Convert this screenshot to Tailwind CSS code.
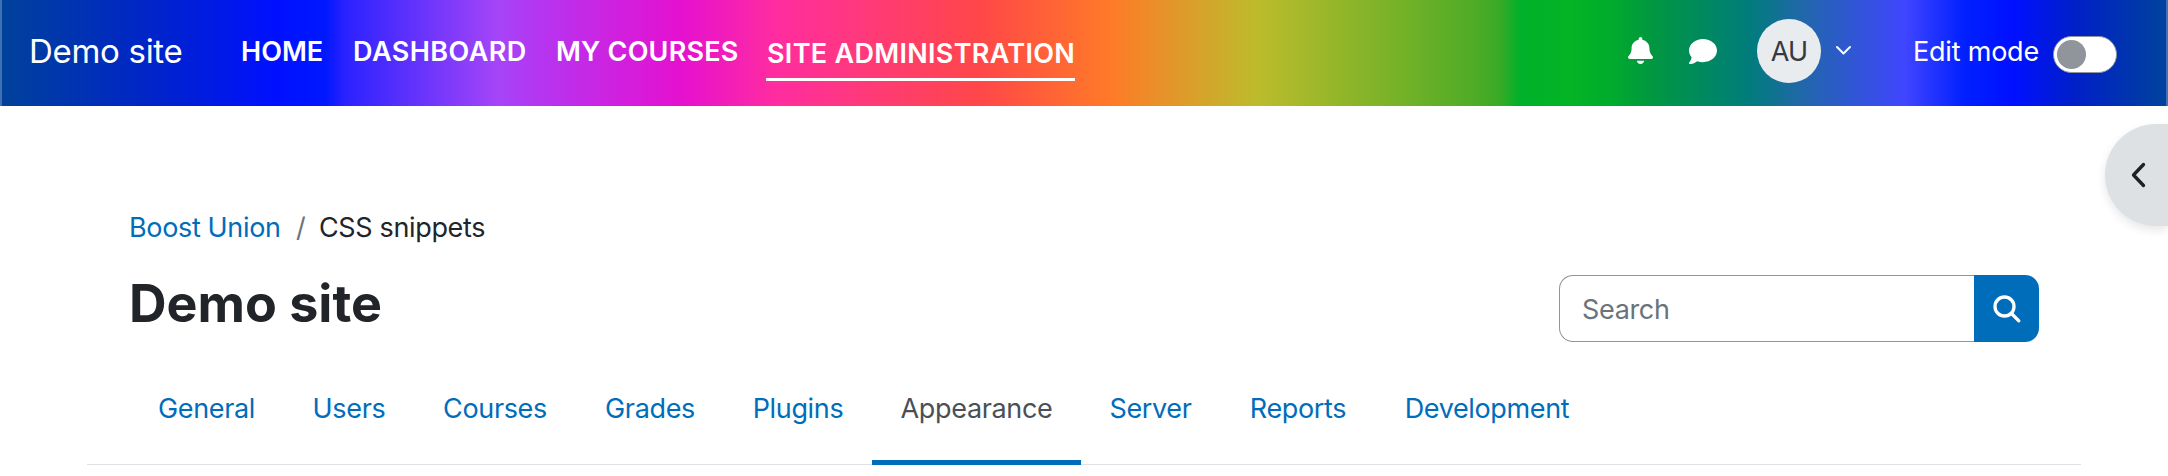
<!DOCTYPE html>
<html lang="en">
<head>
<meta charset="utf-8">
<title>Demo site</title>
<script src="https://cdn.jsdelivr.net/npm/@tailwindcss/browser@4"></script>
</head>
<body class="h-[476px] overflow-hidden bg-white font-['Inter','Liberation_Sans',sans-serif] text-[27px] leading-[40px] tracking-[-0.35px] text-[#212529]">
<header class="flex h-[106px] items-center border-x-2 border-white/25 bg-origin-border bg-[linear-gradient(90deg,#00429a_0px,#0025c8_150px,#0010ff_275px,#0018ff_325px,#2a22ff_345px,#a545f8_497px,#b535f0_540px,#e510d0_680px,#ff2ca0_775px,#ff3a78_870px,#ff4748_980px,#ff7a28_1110px,#bcbc2c_1257px,#52ac26_1470px,#38aa26_1500px,#00b02a_1520px,#04b424_1570px,#00ac2c_1610px,#00983f_1650px,#007c7c_1750px,#2068a8_1800px,#4045ff_1905px,#0020ff_1965px,#0010ff_2015px,#0020c8_2075px,#0040a0_2160px)] pl-[27px] text-white">
  <a class="mb-[4px] w-[212px] whitespace-nowrap text-[33px] tracking-[-0.3px]">Demo site</a>
  <nav class="flex items-center whitespace-nowrap font-semibold">
    <a class="mb-[2px] w-[112px] tracking-normal">HOME</a>
    <a class="mb-[2px] w-[203px] tracking-[0.45px]">DASHBOARD</a>
    <a class="mb-[2px] w-[210px] tracking-[0.2px]">MY COURSES</a>
    <a class="mt-[8px] w-[309px] border-b-3 border-white pb-[4px] pl-[1px] tracking-[0.3px]">SITE ADMINISTRATION</a>
  </nav>
  <div class="ml-auto flex items-center">
    <svg class="mt-[-5px] mr-[36px] h-[27px] w-[25px]" viewBox="0 0 448 512" preserveAspectRatio="none" fill="currentColor"><path d="M224 0c-17.700 0-32 14.300-32 32v19.200C119 66 64 130.600 64 208v18.800c0 47-17.300 92.400-48.500 127.600l-7.400 8.300c-8.400 9.400-10.400 22.900-5.300 34.400S19.400 416 32 416h384c12.600 0 24-7.400 29.200-18.900s3.100-25-5.300-34.400l-7.400-8.300C401.300 319.200 384 273.900 384 226.800V208c0-77.400-55-142-128-156.800V32c0-17.700-14.300-32-32-32zm45.300 493.300c12-12 18.700-28.300 18.700-45.300H160c0 17 6.700 33.300 18.700 45.300S207 512 224 512s33.300-6.700 45.300-18.700z"/></svg>
    <svg class="mt-[-3px] mr-[40px] h-[25px] w-[28px]" viewBox="0 32 512 448" preserveAspectRatio="none" fill="currentColor"><path d="M512 240c0 114.900-114.600 208-256 208-37.100 0-72.300-6.400-104.100-17.900-11.900 8.700-31.300 20.600-54.300 30.600C73.600 471.100 44.700 480 16 480c-6.500 0-12.300-3.900-14.800-9.900s-1.100-12.800 3.400-17.400l.3-.3c.3-.3.7-.7 1.300-1.400 1.100-1.200 2.800-3.100 4.900-5.700 4.100-5 9.600-12.400 15.200-21.600 10-16.600 19.500-38.400 21.400-62.900C17.700 326.800 0 285.100 0 240 0 125.100 114.600 32 256 32s256 93.100 256 208z"/></svg>
    <div class="mt-[-5px] flex size-[64px] items-center justify-center rounded-full bg-[#e9ecef] pt-[2px] tracking-[-0.8px] text-[#343a40]">AU</div>
    <svg class="mt-[-5px] mr-[61px] ml-[14px] h-[11px] w-[17px]" viewBox="0 0 17 11" fill="none" stroke="currentColor" stroke-width="2" stroke-linecap="round" stroke-linejoin="round"><path d="M2 2l6.500 6.500L15 2"/></svg>
    <span class="mb-[2px] whitespace-nowrap tracking-[-0.2px]">Edit mode</span>
    <div class="mt-[3px] mr-[49px] ml-[14px] flex h-[37px] w-[64px] items-center rounded-full border border-[#8f959e] bg-white pl-[3px]"><span class="size-[29px] rounded-full bg-[#8f959b]"></span></div>
  </div>
</header>
<div class="absolute top-[124px] right-0 flex h-[102px] w-[63px] items-center rounded-l-[51px] bg-[#dde1e3] pl-[26px] shadow-[0_4px_10px_rgba(0,0,0,0.10)]">
  <svg class="h-[26px] w-[15px]" viewBox="0 0 15 26" fill="none" stroke="#1d2125" stroke-width="3.300" stroke-linecap="round" stroke-linejoin="round"><path d="M12.500 2.500L2.500 13l10 10.500"/></svg>
</div>
<main class="mx-[87px] pt-[102px]">
  <div class="flex items-center whitespace-nowrap pl-[42px]">
    <a class="w-[167px] text-[#006dbb]">Boost Union</a><span class="w-[23px] text-[#6a737b]">/</span><span>CSS snippets</span>
  </div>
  <div class="mt-[27px] flex h-[67px] pl-[42px]">
    <h1 class="mt-[-11px] flex-1 whitespace-nowrap text-[52px] leading-[80px] font-bold tracking-[0px]">Demo site</h1>
    <div class="mr-[42px] flex h-[67px] w-[480px]">
      <div class="flex flex-1 items-center rounded-l-[14px] border border-r-0 border-[#8f959e] pt-[2px] pl-[22px] text-[#6a737b]">Search</div>
      <div class="flex w-[65px] items-center justify-center rounded-r-[14px] bg-[#006dbb]">
        <svg class="size-[28px]" viewBox="0 0 28 28" fill="none" stroke="#fff" stroke-width="3.300" stroke-linecap="round"><circle cx="11.500" cy="11.500" r="9.500"/><path d="M18.500 18.500l7.300 7.300"/></svg>
      </div>
    </div>
  </div>
  <nav class="mt-[33px] flex h-[90px] border-b border-[#dee2e6] pl-[42px] text-center whitespace-nowrap text-[#006dbb]">
    <a class="w-[155px] pt-[14px]">General</a>
    <a class="w-[130px] pt-[14px]">Users</a>
    <a class="w-[162px] pt-[14px]">Courses</a>
    <a class="w-[148px] pt-[14px]">Grades</a>
    <a class="w-[148px] pt-[14px]">Plugins</a>
    <a class="h-[90px] w-[209px] border-b-5 border-[#006dbb] pt-[14px] text-[#495057]">Appearance</a>
    <a class="w-[139px] pt-[14px]">Server</a>
    <a class="w-[156px] pt-[14px]">Reports</a>
    <a class="w-[222px] pt-[14px]">Development</a>
  </nav>
</main>
</body>
</html>
